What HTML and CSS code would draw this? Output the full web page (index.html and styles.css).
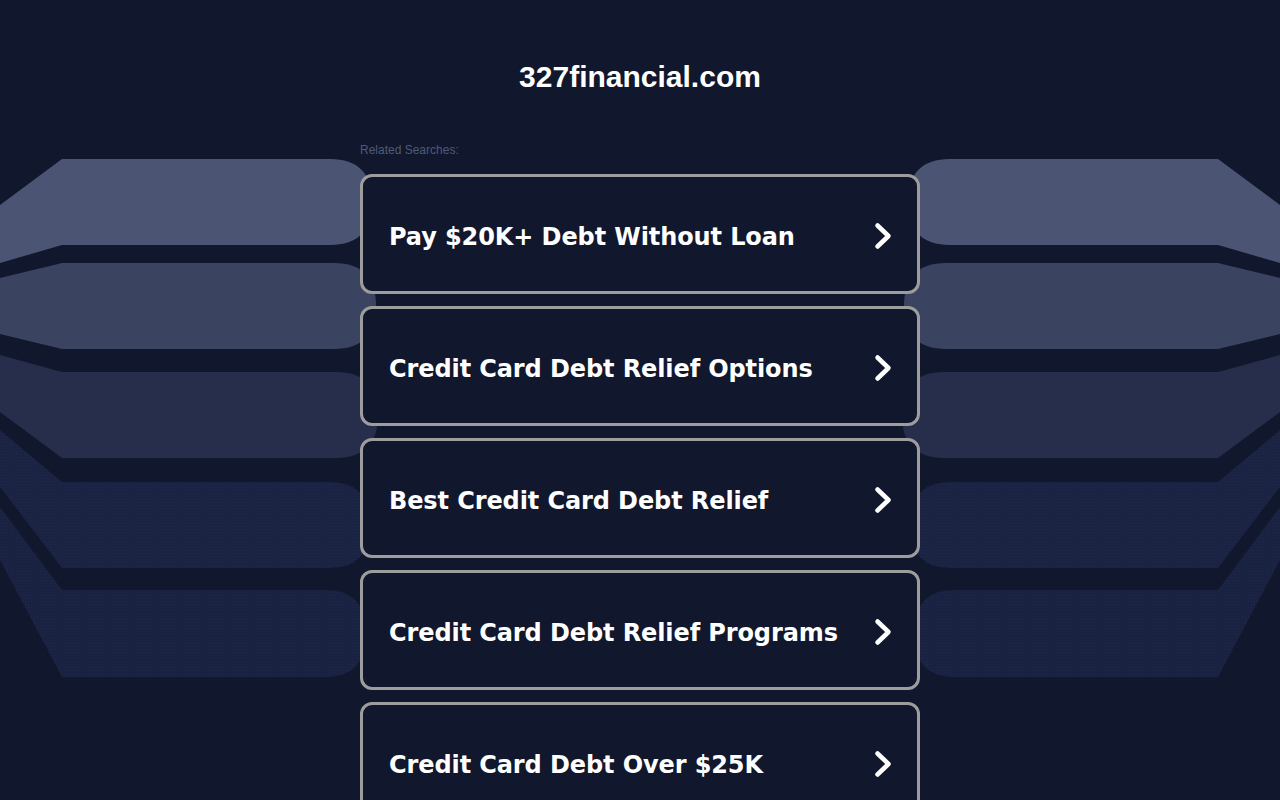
FILE: index.html
```html
<!DOCTYPE html>
<html lang="en">
<head>
<meta charset="utf-8">
<title>327financial.com</title>
<link rel="stylesheet" href="styles.css">
</head>
<body>
<svg class="backdrop" width="1280" height="800" viewBox="0 0 1280 800" aria-hidden="true">
  <defs>
    <pattern id="dots" width="3" height="3" patternUnits="userSpaceOnUse">
      <rect x="1" y="1" width="1" height="1" fill="#2a3462"/>
    </pattern>
    <g id="bands">
      <path fill="#4b5573" d="M0 205 L62 159 L330 159 Q372 159 372 202 Q372 245 330 245 L62 245 L0 263 Z"/>
      <path fill="#3a4461" d="M0 278 L62 263 L334 263 Q376 263 376 306 Q376 349 334 349 L62 349 L0 334 Z"/>
      <path fill="#262e4c" d="M0 355 L62 372 L336 372 Q378 372 378 415 Q378 458 336 458 L62 458 L0 412 Z"/>
      <path fill="#1b2343" d="M0 430 L62 482 L330 482 Q370 482 370 525 Q370 568 330 568 L62 568 L0 487 Z"/>
      <path fill="url(#dots)" opacity="0.3" d="M0 430 L62 482 L330 482 Q370 482 370 525 Q370 568 330 568 L62 568 L0 487 Z"/>
      <path fill="#1a2242" d="M0 507 L62 590 L326 590 Q366 590 366 633 Q366 677 326 677 L62 677 L0 560 Z"/>
      <path fill="url(#dots)" opacity="0.3" d="M0 507 L62 590 L326 590 Q366 590 366 633 Q366 677 326 677 L62 677 L0 560 Z"/>
    </g>
  </defs>
  <use href="#bands"/>
  <use href="#bands" transform="matrix(-1 0 0 1 1280 0)"/>
</svg>

<main class="page">
  <h1 class="domain">327financial.com</h1>
  <section class="related">
    <p class="related-label">Related Searches:</p>
    <ul class="links">
      <li><a class="link" href="#"><span class="link-text">Pay $20K+ Debt Without Loan</span><svg class="chev" width="20" height="28" viewBox="0 0 20 28"><path d="M4.5 3.5 L15.5 14 L4.5 24.5"/></svg></a></li>
      <li><a class="link" href="#"><span class="link-text">Credit Card Debt Relief Options</span><svg class="chev" width="20" height="28" viewBox="0 0 20 28"><path d="M4.5 3.5 L15.5 14 L4.5 24.5"/></svg></a></li>
      <li><a class="link" href="#"><span class="link-text">Best Credit Card Debt Relief</span><svg class="chev" width="20" height="28" viewBox="0 0 20 28"><path d="M4.5 3.5 L15.5 14 L4.5 24.5"/></svg></a></li>
      <li><a class="link" href="#"><span class="link-text">Credit Card Debt Relief Programs</span><svg class="chev" width="20" height="28" viewBox="0 0 20 28"><path d="M4.5 3.5 L15.5 14 L4.5 24.5"/></svg></a></li>
      <li><a class="link" href="#"><span class="link-text">Credit Card Debt Over $25K</span><svg class="chev" width="20" height="28" viewBox="0 0 20 28"><path d="M4.5 3.5 L15.5 14 L4.5 24.5"/></svg></a></li>
    </ul>
  </section>
</main>
</body>
</html>
```

FILE: styles.css
```css
html, body {
  margin: 0;
  padding: 0;
  background: #11172c;
  height: 100%;
  overflow: hidden;
}

body {
  font-family: "Liberation Sans", Arial, sans-serif;
  color: #ffffff;
  position: relative;
}

.backdrop {
  position: absolute;
  top: 0;
  left: 0;
  z-index: 0;
}

.page {
  position: relative;
  z-index: 1;
  width: 560px;
  margin: 0 auto;
}

.domain {
  margin: 0;
  padding-top: 60px;
  font-family: "Liberation Sans", Arial, sans-serif;
  font-size: 30px;
  line-height: 34px;
  font-weight: bold;
  text-align: center;
  color: #ffffff;
}

.related {
  margin-top: 49px;
}

.related-label {
  margin: 0 0 17px 0;
  font-size: 12px;
  line-height: 14px;
  color: #4e5a7c;
}

.links {
  list-style: none;
  margin: 0;
  padding: 0;
  display: flex;
  flex-direction: column;
  gap: 12px;
}

.link {
  box-sizing: border-box;
  height: 120px;
  display: flex;
  align-items: center;
  justify-content: space-between;
  padding: 6px 24px 0 26px;
  border: 3px solid #9d9d9d;
  border-radius: 12px;
  background: #11172c;
  text-decoration: none;
  color: #ffffff;
}

.link-text {
  font-family: "DejaVu Sans", Verdana, sans-serif;
  font-size: 24px;
  font-weight: bold;
  line-height: 30px;
  letter-spacing: -0.1px;
}

.chev {
  flex: none;
  margin-bottom: 2px;
}

.chev path {
  fill: none;
  stroke: #ffffff;
  stroke-width: 4.5;
  stroke-linecap: round;
  stroke-linejoin: round;
}
```
